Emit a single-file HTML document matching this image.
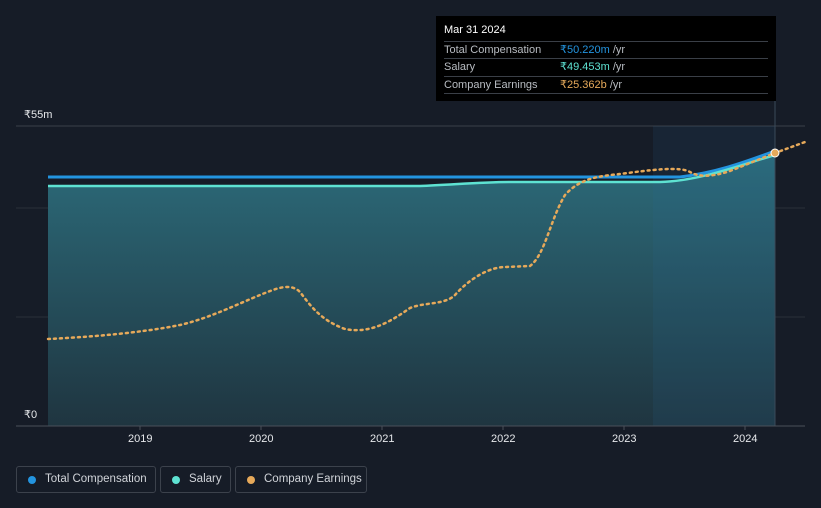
<!DOCTYPE html>
<html><head><style>
html,body{margin:0;background:#161c27;width:821px;height:508px;overflow:hidden;font-family:"Liberation Sans",sans-serif;position:relative}
.tt{position:absolute;left:436px;top:16px;width:340px;height:85px;background:#000}
.tt .h{position:absolute;left:8px;top:8px;color:#fff;font-size:11px}
.row{position:absolute;left:8px;width:324px;border-top:1px solid #3a3f47;height:17px;font-size:11px;color:#b8bcc2;line-height:17px;white-space:nowrap}
.row span{position:absolute;left:116px}
.leg{position:absolute;top:466px;height:27px;border:1px solid #3c424c;border-radius:3px;color:#d0d3d8;font-size:11.5px;line-height:25px;box-sizing:border-box;white-space:nowrap}
.leg i{position:absolute;left:11px;top:9px;width:8px;height:8px;border-radius:50%}
.leg b{font-weight:normal;position:absolute;left:28px}
.ax{position:absolute;color:#e6e8eb;font-size:11px}
</style></head><body>
<svg width="821" height="508" style="position:absolute;left:0;top:0">
<defs><linearGradient id="g" x1="0" y1="0" x2="0" y2="1"><stop offset="0" stop-color="#2c6b7a"/><stop offset="1" stop-color="#1f3540"/></linearGradient></defs>
<line x1="16" y1="126" x2="805" y2="126" stroke="#3a404a"/>
<line x1="16" y1="208" x2="805" y2="208" stroke="#2a303a"/>
<line x1="16" y1="317" x2="805" y2="317" stroke="#2a303a"/>
<path d="M48 186 L420 186 C450 185 480 182 510 182 L660 182 C700 181 740 165 775 155 L775 426 L48 426Z" fill="url(#g)"/>
<rect x="653" y="126" width="122" height="300" fill="#2a6fa0" opacity="0.12"/>
<line x1="775" y1="100" x2="775" y2="426" stroke="#3a4a5a"/>
<path d="M48 177 L680 177 C720 172 750 160 775 151" fill="none" stroke="#2394df" stroke-width="3"/>
<path d="M48 186 L420 186 C450 185 480 182 510 182 L660 182 C700 181 740 165 775 155" fill="none" stroke="#5ee2d2" stroke-width="2.5"/>
<path d="M48 339 C90 337 140 333 180 325 C210 318 240 303 260 295 C275 289 290 282 300 292 C310 305 320 320 345 329 C370 334 390 322 410 308 C425 302 445 305 455 295 C470 278 490 267 505 267 L530 266 C545 255 550 220 565 195 C580 178 600 176 620 174 C650 170 680 166 690 172 C700 178 715 176 730 171 C750 163 765 157 775 153 L805 142" fill="none" stroke="#e6a95a" stroke-width="2.5" stroke-dasharray="2 4" stroke-linecap="round"/>
<line x1="16" y1="426" x2="805" y2="426" stroke="#4a505a"/>
<circle cx="775" cy="153" r="4" fill="#e6a95a" stroke="#fff" stroke-width="1"/>
<g stroke="#4a505a"><line x1="140" y1="426" x2="140" y2="430"/><line x1="261" y1="426" x2="261" y2="430"/><line x1="382" y1="426" x2="382" y2="430"/><line x1="503" y1="426" x2="503" y2="430"/><line x1="624" y1="426" x2="624" y2="430"/><line x1="745" y1="426" x2="745" y2="430"/></g>
</svg>
<div class="ax" style="left:24px;top:108px">₹55m</div>
<div class="ax" style="left:24px;top:408px">₹0</div>
<div class="ax" style="left:128px;top:433px">2019</div>
<div class="ax" style="left:249px;top:433px">2020</div>
<div class="ax" style="left:370px;top:433px">2021</div>
<div class="ax" style="left:491px;top:433px">2022</div>
<div class="ax" style="left:612px;top:433px">2023</div>
<div class="ax" style="left:733px;top:433px">2024</div>
<div class="tt"><div class="h">Mar 31 2024</div>
<div class="row" style="top:25px">Total Compensation<span><font color="#2394df">₹50.220m</font> /yr</span></div>
<div class="row" style="top:42px">Salary<span><font color="#5ee2d2">₹49.453m</font> /yr</span></div>
<div class="row" style="top:60px">Company Earnings<span><font color="#e6a95a">₹25.362b</font> /yr</span></div>
<div class="row" style="top:77px;height:0"></div>
</div>
<div class="leg" style="left:16px;width:140px"><i style="background:#2394df"></i><b>Total Compensation</b></div>
<div class="leg" style="left:160px;width:71px"><i style="background:#5ee2d2"></i><b>Salary</b></div>
<div class="leg" style="left:235px;width:132px"><i style="background:#e6a95a"></i><b>Company Earnings</b></div>
</body></html>
